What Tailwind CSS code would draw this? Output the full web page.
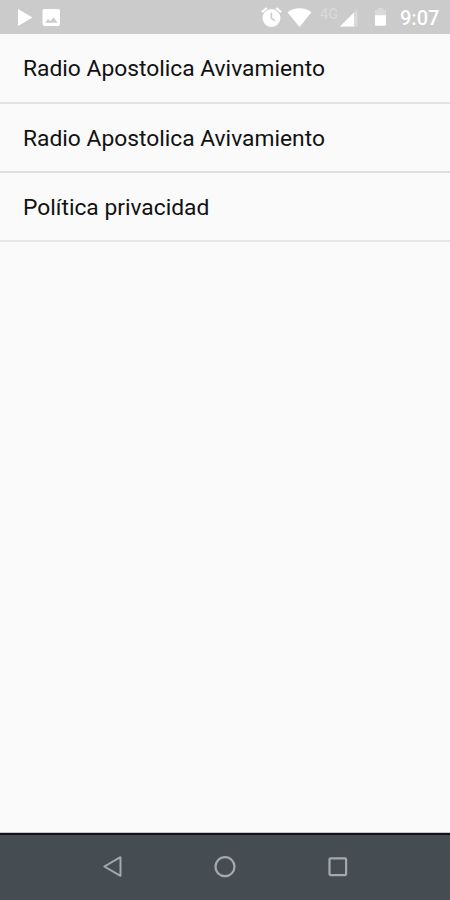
<!DOCTYPE html>
<html lang="es">
  <head>
    <meta charset="UTF-8" />
    <meta name="viewport" content="width=device-width, initial-scale=1.0" />
    <title>Radio Apostolica Avivamiento</title>
    <script src="https://cdn.jsdelivr.net/npm/@tailwindcss/browser@4"></script>
  </head>
  <body class="bg-[#fafafa] font-['Roboto',sans-serif]">
    <div class="flex h-[900px] w-[450px] flex-col overflow-hidden">
      <!-- Status bar -->
      <header class="flex h-[34px] shrink-0 items-center bg-[#cbcbcb] pl-[18px] text-white">
        <svg class="h-[34px] w-[15px]" viewBox="0 0 15 34" fill="currentColor">
          <path d="M0 9v17l14.5-8.5z" />
        </svg>
        <svg class="ml-[9px] h-[34px] w-[18px]" viewBox="0 0 18 34">
          <rect x="0.5" y="9" width="17.5" height="17" rx="2" fill="currentColor" />
          <path d="M3 22.8l3-3.8 2.4 2.3 3.1-4 4 5.5z" fill="#cbcbcb" />
        </svg>
        <svg class="ml-[201px] h-[34px] w-[22px]" viewBox="0 0 22 34">
          <circle cx="10.5" cy="18" r="9" fill="currentColor" />
          <path d="M.8 12.2l5-4.2M20.2 12.2l-5-4.2" stroke="currentColor" stroke-width="2.2" />
          <path d="M10.4 12.8v5.5l3.8 2.6" fill="none" stroke="#cbcbcb" stroke-width="1.6" />
        </svg>
        <svg class="ml-[4px] h-[34px] w-[25px]" viewBox="0 0 25 34" fill="currentColor">
          <path d="M.5 12.3C7 7 18 7 24.5 12.3L12.5 27z" />
        </svg>
        <span class="ml-[8px] w-[19px] -translate-y-[2px] text-[14.5px] leading-none font-medium text-[#d8d8d8]">4G</span>
        <svg class="ml-[1px] h-[34px] w-[18px]" viewBox="0 0 18 34">
          <path d="M0 26.5L17.5 9v17.5z" fill="#d9d9d9" />
          <path d="M0 26.5L14 12.5v14z" fill="currentColor" />
        </svg>
        <svg class="ml-[17px] h-[34px] w-[12px]" viewBox="0 0 12 34">
          <path d="M0 10h3V8h5v2h3v7H0z" fill="#d9d9d9" />
          <path d="M0 15.3h11v9.5a1 1 0 0 1-1 1H1a1 1 0 0 1-1-1z" fill="currentColor" />
        </svg>
        <span class="ml-[13px] translate-y-px text-[20px] leading-none font-medium">9:07</span>
      </header>

      <ul class="flex-1 text-[22.8px] leading-none text-[#111]">
        <li class="flex h-[70px] items-center border-b-2 border-[#e2e2e2] pt-[2px] pl-[23px]">Radio Apostolica Avivamiento</li>
        <li class="flex h-[69px] items-center border-b-2 border-[#dedede] pt-[3px] pl-[23px]">Radio Apostolica Avivamiento</li>
        <li class="flex h-[69px] items-center border-b-2 border-[#e6e6e6] pt-[3px] pl-[23px]">Política privacidad</li>
      </ul>

      <!-- Navigation bar -->
      <nav class="flex h-[67px] shrink-0 justify-center gap-[90px] border-t-2 border-[#0f1216] bg-[#454d52] pt-[20px] text-[#a3a9ac] shadow-[0_-1px_0_#c4c8cc]">
        <svg class="h-[23px] w-[23px]" viewBox="0 0 23 23" fill="none" stroke="currentColor" stroke-width="2">
          <path d="M19.5 2.2v18.6L3.3 11.5z" stroke-linejoin="round" />
        </svg>
        <svg class="h-[23px] w-[23px]" viewBox="0 0 23 23" fill="none" stroke="currentColor" stroke-width="2.2">
          <circle cx="11" cy="11.7" r="9.5" />
        </svg>
        <svg class="h-[23px] w-[23px]" viewBox="0 0 23 23" fill="none" stroke="currentColor" stroke-width="2.2">
          <rect x="2.5" y="3.3" width="16.6" height="16.8" rx="1" />
        </svg>
      </nav>
    </div>
  </body>
</html>
